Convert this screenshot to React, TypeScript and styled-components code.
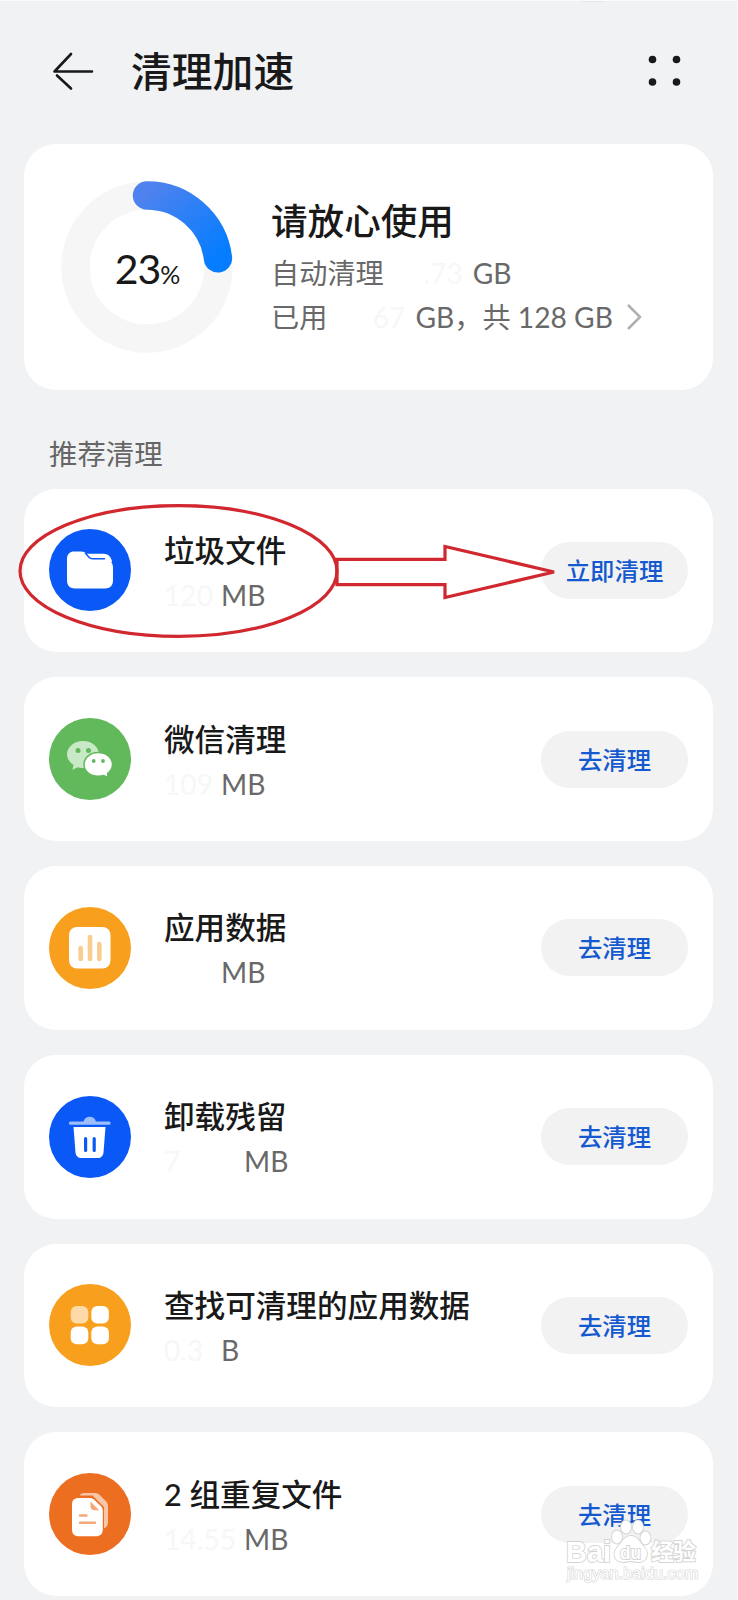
import React from "react";
import styled, { createGlobalStyle } from "styled-components";

const GlobalStyle = createGlobalStyle`
  * { box-sizing: border-box; }
  body { margin: 0; background: #f1f2f4; }
`;

const Screen = styled.main`
  position: relative;
  width: 738px;
  height: 1600px;
  overflow: hidden;
  padding: 0 24px;
  background: #f1f2f4;
  border-top: 1px solid #fbfbfc;
  border-right: 1px solid #fafafb;
  font-family: Lato, "Noto Sans CJK SC", sans-serif;
  color: #191919;
`;

const Header = styled.header`
  display: flex;
  align-items: center;
  height: 143px;
  padding: 0 32px 4px 28px;
`;

const Title = styled.h1`
  flex: 1;
  margin: 0 0 0 37px;
  padding-top: 3px;
  font-size: 40.8px;
  line-height: 60px;
  font-weight: 500;
`;

const StatusCard = styled.section`
  display: flex;
  align-items: center;
  height: 246px;
  border-radius: 32px;
  background: #fff;
  padding-left: 37px;
`;

const Gauge = styled.div`
  display: grid;
  place-items: center;
  width: 172px;
  height: 172px;
  > * { grid-area: 1 / 1; }
`;

const Percent = styled.div`
  display: flex;
  align-items: baseline;
  line-height: 48px;
  font-size: 41px;
  letter-spacing: -1px;
  padding: 8px 0 0 1px;
  small { font-size: 25px; letter-spacing: 0; }
`;

const StatusText = styled.div`
  margin-left: 38px;
`;

const Headline = styled.h2`
  margin: 0 0 5px;
  font-size: 36.6px;
  line-height: 50px;
  font-weight: 500;
`;

const InfoLine = styled.div`
  display: flex;
  align-items: center;
  height: 44px;
  font-size: 28.2px;
  line-height: 44px;
  color: #696969;
  white-space: pre;
`;

const Faded = styled.span<{ $w: number; $end?: boolean }>`
  display: inline-block;
  width: ${(p) => p.$w}px;
  padding-right: ${(p) => (p.$end ? 10 : 0)}px;
  color: #f7f7f7;
  text-align: ${(p) => (p.$end ? "right" : "left")};
`;

const Chevron = styled.svg`
  margin-left: 13px;
`;

const SectionLabel = styled.h3`
  margin: 0;
  height: 98.5px;
  padding: 42px 0 0 25px;
  font-size: 28.4px;
  line-height: 44px;
  font-weight: 400;
  color: #666;
`;

const List = styled.div`
  display: flex;
  flex-direction: column;
  gap: 25px;
`;

const Row = styled.section`
  display: flex;
  align-items: center;
  flex: none;
  height: 163.75px;
  border-radius: 32px;
  background: #fff;
  padding: 0 25px;
`;

const RowText = styled.div`
  flex: 1;
  margin-left: 33px;
  padding-top: 5px;
`;

const RowTitle = styled.div`
  font-size: 30.6px;
  line-height: 44px;
  font-weight: 500;
  white-space: pre;
`;

const Button = styled.button`
  width: 147px;
  height: 57px;
  border: 0;
  border-radius: 29px;
  background: #f2f2f2;
  color: #1459cf;
  font: 500 24.4px/36px Lato, "Noto Sans CJK SC", sans-serif;
  padding: 1px 0 0;
`;

const Overlay = styled.svg`
  position: absolute;
  left: 0;
  top: -1px;
  pointer-events: none;
`;

const FolderIcon = () => (
  <>
    <circle cx="41" cy="41" r="41" fill="#0a59f7" />
    <path d="M37 24.700h17.500c4.500 0 8 3.300 8.500 8.300H44z" fill="#fff" />
    <path d="M25 22.500h7c2.500 0 4 .7 5.500 2.500l3 3.500c1.200 1.400 2.300 2 4.500 2H55.500c5.500 0 8.500 3 8.500 8v13c0 5-3 8-8 8H26c-5 0-8-3-8-8V30c0-5 3-7.500 7-7.500z" fill="#fff" />
    <path d="M36.500 24.200l3.500 4c.9 1 1.800 1.500 3.500 1.500h12" fill="none" stroke="#0a59f7" strokeWidth="1.500" strokeLinecap="round" />
  </>
);

const WechatIcon = () => (
  <>
    <circle cx="41" cy="41" r="41" fill="#62b95c" />
    <path d="M34 23c9 0 16 6 16 13.500S43 50 34 50c-2 0-4-.3-5.500-.8L23.500 52l1-5.200C20.500 44.300 18 41 18 36.500 18 29 25 23 34 23z" fill="#c9e8c6" />
    <path d="M49 34.500c8 0 14.500 5 14.500 12 0 3.500-2 6.700-5 9l.8 4.500-4.500-2.500c-1.800.5-3.700.8-5.800.8-8 0-14-5.300-14-11.800s6-12 14-12z" fill="#fff" stroke="#62b95c" strokeWidth="1.500" />
    <g fill="#62b95c">
      <circle cx="29" cy="32.500" r="2.500" />
      <circle cx="39.500" cy="32.500" r="2.500" />
      <circle cx="44.700" cy="43" r="1.900" />
      <circle cx="54" cy="43" r="1.900" />
    </g>
  </>
);

const ChartIcon = () => (
  <>
    <circle cx="41" cy="41" r="41" fill="#f8a01e" />
    <rect x="20" y="20" width="41.500" height="41.500" rx="8" fill="#fff" />
    <path d="M31.700 41v11M41 30v22M50.300 37v15" stroke="#f9cd90" strokeWidth="4.600" strokeLinecap="round" />
  </>
);

const TrashIcon = () => (
  <>
    <circle cx="41" cy="41" r="41" fill="#0a59f7" />
    <path d="M21.500 25.500h13a6.500 6.500 0 0 1 12.500 0h13a1.600 1.600 0 0 1 0 3.300h-38.500a1.600 1.600 0 0 1 0-3.300z" fill="#9dbdfc" />
    <path d="M24.500 31h32l-2 25.500c-.3 3.500-2.500 5.500-6 5.500h-16c-3.500 0-5.700-2-6-5.500z" fill="#fff" />
    <path d="M36.600 42.500v12M45.200 42.500v12" stroke="#0a59f7" strokeWidth="3.200" strokeLinecap="round" />
  </>
);

const AppsIcon = () => (
  <>
    <circle cx="41" cy="41" r="41" fill="#f8a01e" />
    <rect x="21.700" y="22" width="17.600" height="17.600" rx="6" fill="#fddaa8" />
    <g fill="#fff">
      <rect x="42.300" y="22" width="17.600" height="17.600" rx="6" />
      <rect x="21.700" y="42.600" width="17.600" height="17.600" rx="6" />
      <rect x="42.300" y="42.600" width="17.600" height="17.600" rx="6" />
    </g>
  </>
);

const FilesIcon = () => (
  <>
    <circle cx="41" cy="41" r="41" fill="#ec6e21" />
    <path d="M30.500 22.500c1-1.700 2.500-2.500 5-2.500H46c2 0 3.500.7 5 2.200l6 6c1.300 1.300 2 2.800 2 4.800V49c0 3.500-1.500 5.500-4 6.500V34L43.500 22.500z" fill="#f8c5a6" />
    <path d="M30 25h10.500c2 0 3.500.6 5 2l6.300 6c1.300 1.400 2 2.800 2 4.800V56c0 5-2.300 7.300-7.300 7.300H30c-5 0-7-2.300-7-7.300V32c0-5 2-7 7-7z" fill="#fff" />
    <path d="M41.500 28.500v4.500c0 3 1.500 4.300 4.300 4.300h4.500z" fill="#f4a878" />
    <path d="M31 42.500h6.500M31 49.800h15" stroke="#f4a878" strokeWidth="2.400" strokeLinecap="round" />
  </>
);

type Item = {
  title: string;
  faded: string;
  width: number;
  unit: string;
  action: string;
  Icon: React.FC;
};

const items: Item[] = [
  { title: "垃圾文件", faded: "120", width: 57, unit: "MB", action: "立即清理", Icon: FolderIcon },
  { title: "微信清理", faded: "109", width: 57, unit: "MB", action: "去清理", Icon: WechatIcon },
  { title: "应用数据", faded: "", width: 57, unit: "MB", action: "去清理", Icon: ChartIcon },
  { title: "卸载残留", faded: "7", width: 80, unit: "MB", action: "去清理", Icon: TrashIcon },
  { title: "查找可清理的应用数据", faded: "0.3", width: 57, unit: "B", action: "去清理", Icon: AppsIcon },
  { title: "2 组重复文件", faded: "14.55", width: 80, unit: "MB", action: "去清理", Icon: FilesIcon },
];

const arc = 2 * Math.PI * 71.5;

export default function App() {
  return (
    <Screen lang="zh-CN">
      <GlobalStyle />
      <Header>
        <svg width="42" height="40" viewBox="0 0 42 40" fill="none" stroke="#191919" strokeWidth="2.600" strokeLinecap="round" strokeLinejoin="round">
          <path d="M19 3L2.500 20.500h37.500M5 24.500L19 37.500" />
        </svg>
        <Title>清理加速</Title>
        <svg width="34" height="34" viewBox="0 0 34 34" fill="#191919">
          <circle cx="5.500" cy="5.500" r="3.800" />
          <circle cx="29.500" cy="5.500" r="3.800" />
          <circle cx="5.500" cy="28" r="3.800" />
          <circle cx="29.500" cy="28" r="3.800" />
        </svg>
      </Header>

      <StatusCard>
        <Gauge>
          <svg width="172" height="172" viewBox="0 0 172 172" fill="none" strokeWidth="28.400">
            <defs>
              <linearGradient id="usage" x1="86" y1="10" x2="150" y2="80" gradientUnits="userSpaceOnUse">
                <stop offset="0" stopColor="#4f82ee" />
                <stop offset="1" stopColor="#067dff" />
              </linearGradient>
            </defs>
            <circle cx="86" cy="86" r="71.500" stroke="#f6f6f6" />
            <path
              d="M86 14.500A71.500 71.500 0 0 1 157.500 86"
              stroke="url(#usage)"
              strokeLinecap="round"
              strokeDasharray={`${arc * 0.23} ${arc}`}
            />
          </svg>
          <Percent>23<small>%</small></Percent>
        </Gauge>
        <StatusText>
          <Headline>请放心使用</Headline>
          <InfoLine>自动清理<Faded $w={89} $end>.73</Faded>GB</InfoLine>
          <InfoLine>
            已用<Faded $w={88} $end>67</Faded>GB，共 128 GB
            <Chevron width="16" height="28" viewBox="0 0 16 28" fill="none" stroke="#b0b0b0" strokeWidth="2.600">
              <path d="M2 2l12 12L2 26" />
            </Chevron>
          </InfoLine>
        </StatusText>
      </StatusCard>

      <SectionLabel>推荐清理</SectionLabel>

      <List>
        {items.map(({ title, faded, width, unit, action, Icon }) => (
          <Row key={title}>
            <svg width="82" height="82" viewBox="0 0 82 82"><Icon /></svg>
            <RowText>
              <RowTitle>{title}</RowTitle>
              <InfoLine><Faded $w={width}>{faded}</Faded>{unit}</InfoLine>
            </RowText>
            <Button>{action}</Button>
          </Row>
        ))}
      </List>

      <Overlay width="738" height="1600" viewBox="0 0 738 1600">
        <path d="M578 0h31q-3 2-8 2h-15q-5 0-8-2z" fill="#e6e7e9" />
        <g fill="none" stroke="#d0282e" strokeWidth="3.200">
          <ellipse cx="178.500" cy="571" rx="158.500" ry="65.300" />
          <path d="M337 559.300H445V546.500L554 572L445 597.500V584.700H337z" />
        </g>
        <g fill="#fff" stroke="#d4d4d4" strokeWidth="1.800" paintOrder="stroke" fontFamily="Liberation Sans, Noto Sans CJK SC, sans-serif">
          <text x="566" y="1562" fontSize="30" fontWeight="700" textLength="45" lengthAdjust="spacingAndGlyphs">Bai</text>
          <ellipse cx="617" cy="1537" rx="5" ry="6.500" />
          <ellipse cx="626" cy="1527" rx="5" ry="6.500" />
          <ellipse cx="638" cy="1527" rx="5" ry="6.500" />
          <ellipse cx="645.500" cy="1538" rx="5" ry="6.500" />
          <path d="M631 1536c6 0 8 5 11 8.500 3 3.500 5 6 5 9.500 0 5-4 8-8 8-3 0-5-1-8-1s-5 1-8 1c-5 0-8.500-3-8.500-8 0-3.500 2-6 5-9.500 3-3.500 5.500-8.500 11.500-8.500z" />
          <text x="620" y="1559" fontSize="18" fontWeight="700" textLength="21" lengthAdjust="spacingAndGlyphs">du</text>
          <text x="651" y="1560" fontSize="23" fontWeight="700" textLength="45">经验</text>
          <text x="567" y="1579" fontSize="16" textLength="131" strokeWidth="1.200">jingyan.baidu.com</text>
        </g>
      </Overlay>
    </Screen>
  );
}
